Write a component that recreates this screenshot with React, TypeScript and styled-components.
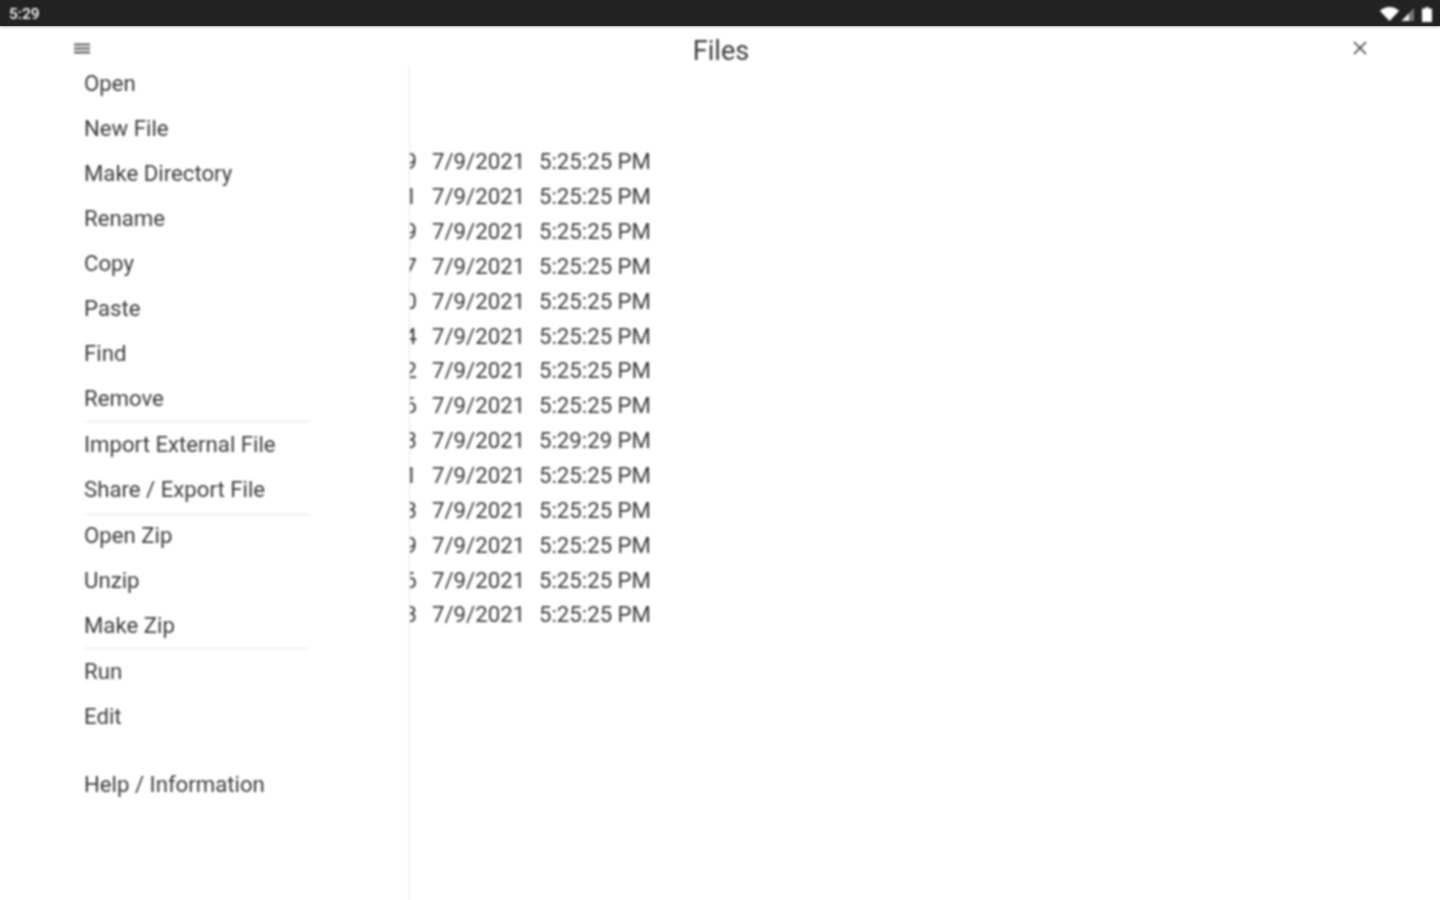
import React from 'react';
import styled, { createGlobalStyle, css } from 'styled-components';

const menuGroups = [
  { items: ['Open', 'New File', 'Make Directory', 'Rename', 'Copy', 'Paste', 'Find', 'Remove'], divider: true },
  { items: ['Import External File', 'Share / Export File'], divider: true },
  { items: ['Open Zip', 'Unzip', 'Make Zip'], divider: true },
  { items: ['Run', 'Edit'], divider: false },
];

const files = [
  { size: '9', time: '5:25:25 PM' },
  { size: '1', time: '5:25:25 PM' },
  { size: '9', time: '5:25:25 PM' },
  { size: '7', time: '5:25:25 PM' },
  { size: '0', time: '5:25:25 PM' },
  { size: '4', time: '5:25:25 PM' },
  { size: '2', time: '5:25:25 PM' },
  { size: '6', time: '5:25:25 PM' },
  { size: '3', time: '5:29:29 PM' },
  { size: '1', time: '5:25:25 PM' },
  { size: '3', time: '5:25:25 PM' },
  { size: '9', time: '5:25:25 PM' },
  { size: '6', time: '5:25:25 PM' },
  { size: '3', time: '5:25:25 PM' },
];

const App = () => (
  <>
    <GlobalStyle />
    <Screen>
      <StatusBar>
        <Clock>5:29</Clock>
        <StatusIcons>
          <svg width="19" height="14" viewBox="0 0 19 14">
            <path d="M0 4C5-1.2 14-1.2 19 4L9.5 14z" fill="#fff" />
          </svg>
          <SignalIcon width="13" height="13" viewBox="0 0 13 13">
            <path d="M13 0V13H0z" fill="#777" />
            <path d="M8 5.5V13H0.5z" fill="#eee" />
          </SignalIcon>
          <svg width="10" height="15" viewBox="0 0 10 15">
            <path d="M3.5 0H6.5V1.5H10V15H0V1.5H3.5z" fill="#fff" />
          </svg>
        </StatusIcons>
      </StatusBar>
      <Header>
        <MenuButton>
          <svg width="18" height="11" viewBox="0 0 18 11">
            <path d="M1 1.5H17M1 5.5H17M1 9.5H17" stroke="#555" strokeWidth="2.2" />
          </svg>
        </MenuButton>
        <Title>Files</Title>
        <CloseButton>
          <svg width="14" height="14" viewBox="0 0 14 14">
            <path d="M1 1L13 13M13 1L1 13" stroke="#444" strokeWidth="1.7" />
          </svg>
        </CloseButton>
      </Header>
      <Body>
        <Sidebar>
          <Menu>
            {menuGroups.map((group) => (
              <MenuGroup key={group.items[0]} $divider={group.divider}>
                {group.items.map((item) => (
                  <MenuItem key={item}>{item}</MenuItem>
                ))}
              </MenuGroup>
            ))}
            <HelpItem>Help / Information</HelpItem>
          </Menu>
        </Sidebar>
        <FileList>
          {files.map((file, index) => (
            <FileRow key={index}>
              <SizeCell>{file.size}</SizeCell>
              <DateCell>7/9/2021</DateCell>
              <span>{file.time}</span>
            </FileRow>
          ))}
        </FileList>
      </Body>
    </Screen>
  </>
);

export default App;

// the reference is an upscaled capture, so everything but the bar fill is slightly soft
const soft = css`
  filter: blur(0.8px);
`;

const GlobalStyle = createGlobalStyle`
  html, body {
    margin: 0;
    background: #fff;
    overflow: hidden;
  }
`;

const Screen = styled.div`
  width: 1440px;
  height: 900px;
  display: flex;
  flex-direction: column;
  overflow: hidden;
  font-family: Roboto, 'Liberation Sans', sans-serif;
  color: #3c3c3c;
`;

const StatusBar = styled.div`
  height: 26px;
  flex: none;
  display: flex;
  align-items: center;
  justify-content: space-between;
  padding: 2px 8px 0 9px;
  box-sizing: border-box;
  background: #222;
  box-shadow: 0 1px 2px rgba(0, 0, 0, 0.35);
  position: relative;
  z-index: 1;
`;

const Clock = styled.span`
  ${soft}
  font-size: 15.5px;
  font-weight: 500;
  color: #fff;
`;

const StatusIcons = styled.div`
  ${soft}
  display: flex;
  align-items: center;
  gap: 2px;
`;

const SignalIcon = styled.svg`
  margin-right: 6px;
`;

const Header = styled.div`
  ${soft}
  height: 40px;
  flex: none;
  display: flex;
  align-items: center;
  justify-content: space-between;
  padding: 0 73px;
`;

const MenuButton = styled.div`
  display: flex;
  margin-top: 4px;
`;

const Title = styled.div`
  font-size: 27px;
  line-height: 40px;
  margin: 9px 2px 0 0;
`;

const CloseButton = styled.div`
  display: flex;
  margin-top: 4px;
`;

const Body = styled.div`
  ${soft}
  flex: 1;
  display: flex;
  min-height: 0;
`;

const Sidebar = styled.div`
  width: 410px;
  flex: none;
  box-sizing: border-box;
  border-right: 1px solid #e6e6e6;
  padding: 0 100px 0 84px;
`;

const Menu = styled.div`
  margin-top: -5px;
`;

const MenuGroup = styled.div<{ $divider: boolean }>`
  border-bottom: ${(p) => (p.$divider ? '1px solid #e6e6e6' : 'none')};
  padding-bottom: 0.3px;

  &:nth-child(1) {
    padding-bottom: 0.8px;
  }

  &:nth-child(2) {
    padding-bottom: 1.8px;
    margin-bottom: -1.5px;
  }
`;

const MenuItem = styled.div`
  height: 44.9px;
  display: flex;
  align-items: center;
  font-size: 22.2px;
  white-space: nowrap;
`;

const HelpItem = styled(MenuItem)`
  margin-top: 22.6px;
`;

const FileList = styled.div`
  padding-top: 78px;
  display: flex;
  flex-direction: column;
`;

const FileRow = styled.div`
  height: 34.85px;
  display: flex;
  align-items: center;
  font-size: 22.2px;
  white-space: nowrap;
`;

const SizeCell = styled.span`
  width: 7px;
  overflow: hidden;
  display: flex;
  justify-content: flex-end;
  margin-right: 15px;
`;

const DateCell = styled.span`
  width: 107px;
`;
